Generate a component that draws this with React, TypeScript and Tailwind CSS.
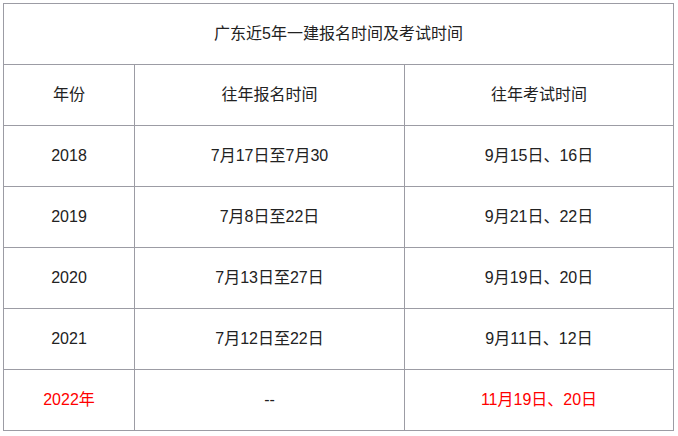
const rows: { year: string; reg: string; exam: string; red?: boolean }[] = [
  { year: "2018", reg: "7月17日至7月30", exam: "9月15日、16日" },
  { year: "2019", reg: "7月8日至22日", exam: "9月21日、22日" },
  { year: "2020", reg: "7月13日至27日", exam: "9月19日、20日" },
  { year: "2021", reg: "7月12日至22日", exam: "9月11日、12日" },
  { year: "2022年", reg: "--", exam: "11月19日、20日", red: true },
];

const cell = "h-[61px] border border-[#9c9ca4] p-0 text-center align-middle";

export default function App() {
  return (
    <div
      className="h-[436px] w-[678px] bg-white pl-[3px] pt-[3px] text-[16px] text-[#222]"
      style={{ fontFamily: '"Liberation Sans", "Noto Sans CJK SC", sans-serif' }}
    >
      <table className="w-[670px] table-fixed border-collapse">
        <colgroup>
          <col className="w-[131px]" />
          <col className="w-[270px]" />
          <col className="w-[269px]" />
        </colgroup>
        <tbody>
          <tr>
            <td colSpan={3} className={cell}>
              广东近5年一建报名时间及考试时间
            </td>
          </tr>
          <tr>
            <td className={cell}>年份</td>
            <td className={cell}>往年报名时间</td>
            <td className={cell}>往年考试时间</td>
          </tr>
          {rows.map((r) => (
            <tr key={r.year}>
              <td className={`${cell} ${r.red ? "text-[#ff0000]" : ""}`}>{r.year}</td>
              <td className={cell}>{r.reg}</td>
              <td className={`${cell} ${r.red ? "text-[#ff0000]" : ""}`}>{r.exam}</td>
            </tr>
          ))}
        </tbody>
      </table>
    </div>
  );
}
